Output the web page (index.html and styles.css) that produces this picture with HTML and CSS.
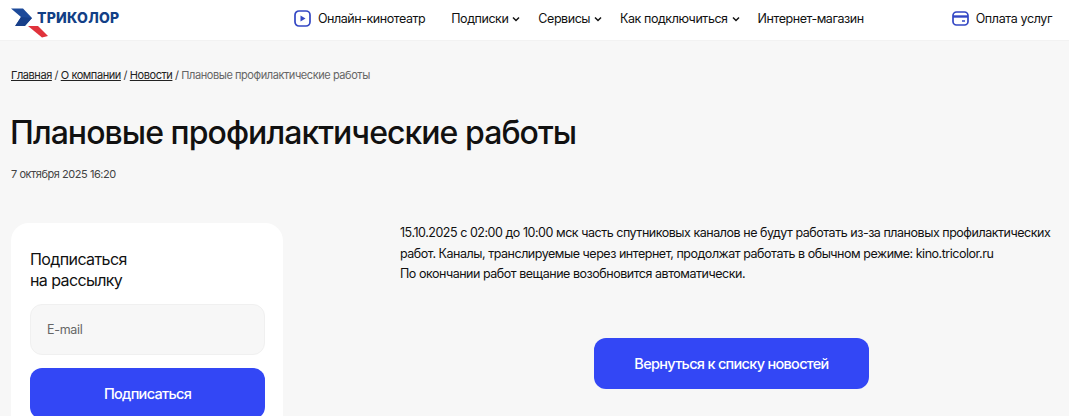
FILE: index.html
```html
<!DOCTYPE html>
<html lang="ru">
<head>
<meta charset="utf-8">
<title>Плановые профилактические работы</title>
<link rel="stylesheet" href="styles.css">
</head>
<body>
<header class="header">
  <a class="logo" href="#">
    <svg class="logo-mark" width="38" height="30" viewBox="0 0 38 30"><path d="M0 0.500H12L21 10L13.500 18H4.500L10 9Z" fill="#1d4a9a"/><path d="M4 18H14L21 10L10 9Z" fill="#173f8a"/><path d="M17 18H27L37 28L31 29.500Z" fill="#e0333c"/></svg>
    <span class="logo-text">ТРИКОЛОР</span>
  </a>
  <nav class="nav">
    <a class="nav-item nav-cinema" href="#">
      <svg class="icon" width="17" height="17" viewBox="0 0 17 17"><rect x="1" y="1" width="15" height="15" rx="4" fill="none" stroke="#3347c4" stroke-width="1.7"/><path d="M6.500 5.500L11.500 8.500L6.500 11.500Z" fill="#3347c4"/></svg>
      Онлайн-кинотеатр
    </a>
    <a class="nav-item" href="#">Подписки <svg class="chev" width="8" height="6" viewBox="0 0 8 6"><path d="M1 1.500L4 4.500L7 1.500" fill="none" stroke="#111" stroke-width="1.500"/></svg></a>
    <a class="nav-item" href="#">Сервисы <svg class="chev" width="8" height="6" viewBox="0 0 8 6"><path d="M1 1.500L4 4.500L7 1.500" fill="none" stroke="#111" stroke-width="1.500"/></svg></a>
    <a class="nav-item" href="#">Как подключиться <svg class="chev" width="8" height="6" viewBox="0 0 8 6"><path d="M1 1.500L4 4.500L7 1.500" fill="none" stroke="#111" stroke-width="1.500"/></svg></a>
    <a class="nav-item" href="#">Интернет-магазин</a>
  </nav>
  <a class="nav-item pay" href="#">
    <svg class="icon" width="17" height="15" viewBox="0 0 17 15"><rect x="1" y="1" width="15" height="13" rx="3.500" fill="none" stroke="#3347c4" stroke-width="1.7"/><path d="M1 5.500H16" stroke="#3347c4" stroke-width="2.400"/><path d="M10 10H13" stroke="#3347c4" stroke-width="1.500"/></svg>
    Оплата услуг
  </a>
</header>
<main class="main">
  <div class="crumbs"><a href="#">Главная</a> / <a href="#">О компании</a> / <a href="#">Новости</a> / <span class="crumb-current">Плановые профилактические работы</span></div>
  <h1 class="title">Плановые профилактические работы</h1>
  <div class="date">7 октября 2025 16:20</div>
  <div class="columns">
    <aside class="card">
      <div class="card-title">Подписаться<br>на рассылку</div>
      <div class="field">E-mail</div>
      <button class="btn btn-wide">Подписаться</button>
    </aside>
    <article class="article">
      <p class="text">15.10.2025 с 02:00 до 10:00 мск часть спутниковых каналов не будут работать из-за плановых профилактических работ. Каналы, транслируемые через интернет, продолжат работать в обычном режиме: kino.tricolor.ru<br>По окончании работ вещание возобновится автоматически.</p>
      <div class="back"><button class="btn btn-back">Вернуться к списку новостей</button></div>
    </article>
  </div>
</main>
</body>
</html>
```
FILE: styles.css
```css
html, body { margin: 0; padding: 0; height: 416px; overflow: hidden; }
body { background: #f7f7f7; font-family: Inter, "Liberation Sans", sans-serif; color: #111; }
a { color: inherit; text-decoration: none; }
.header { height: 41px; background: #fff; display: flex; align-items: center; padding: 0 17px 3px 11px; box-sizing: border-box; border-bottom: 1px solid #f2f2f2; }
.logo { display: flex; align-items: flex-start; align-self: flex-start; width: 283px; height: 30px; margin-top: 8px; }
.logo-mark { flex: none; margin-right: -12px; }
.logo-text { font-size: 14px; font-weight: 800; color: #123f86; letter-spacing: 0.25px; line-height: 17px; margin-top: 1px; }
.nav { display: flex; align-items: center; gap: 18px; flex: 1; }
.nav-item { display: inline-flex; align-items: center; font-size: 12.5px; letter-spacing: -0.45px; line-height: 18px; gap: 4px; white-space: nowrap; }
.nav-cinema { gap: 7px; margin-right: 8px; }
.pay { gap: 7px; letter-spacing: -0.38px; }
.main { padding: 0 11px; }
.crumbs { margin-top: 26px; font-size: 11px; line-height: 16px; letter-spacing: -0.43px; color: #333; }
.crumbs a { text-decoration: underline; color: #222; }
.crumb-current { color: #666; }
.title { margin: 30px 0 0 -1px; font-size: 32px; line-height: 40px; font-weight: 500; letter-spacing: -0.95px; color: #111; }
.date { margin-top: 13px; font-size: 11px; line-height: 16px; letter-spacing: -0.45px; color: #444; }
.columns { display: flex; margin-top: 41px; }
.card { width: 272px; flex: none; height: 240px; background: #fff; border-radius: 18px; padding: 26px 18px 0 19px; box-sizing: border-box; margin-right: 118px; }
.card-title { font-size: 16px; line-height: 21px; letter-spacing: -0.6px; }
.field { margin-top: 13px; height: 51px; border: 1px solid #f0f0f0; border-radius: 12px; background: #f7f7f7; box-sizing: border-box; padding-left: 16px; display: flex; align-items: center; font-size: 12.5px; color: #666; letter-spacing: -0.3px; }
.btn { display: flex; align-items: center; justify-content: center; border: 0; border-radius: 12px; background: #3347f5; color: #fff; font-family: inherit; font-size: 14.5px; font-weight: 500; letter-spacing: -0.7px; }
.btn-wide { width: 100%; height: 51px; margin-top: 13px; }
.article { flex: 1; margin-left: -1px; }
.text { margin: 0; font-size: 12.5px; line-height: 20.5px; letter-spacing: -0.47px; color: #111; }
.back { margin-top: 53px; padding-left: 194px; }
.btn-back { width: 275px; height: 51px; }
```
